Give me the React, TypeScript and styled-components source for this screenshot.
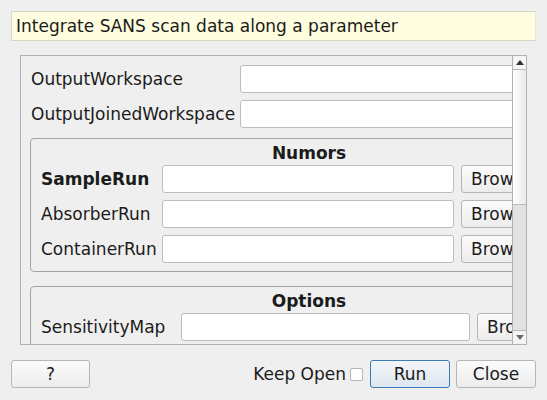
import React from "react";
import styled, { createGlobalStyle } from "styled-components";

const Global = createGlobalStyle`
  html, body { margin: 0; padding: 0; background: #efefef; }
  body { font-family: "DejaVu Sans", "Liberation Sans", sans-serif; font-size: 17px; color: #1b1b1b; }
  * { box-sizing: border-box; }
`;

const Page = styled.div`
  width: 547px;
  height: 400px;
  padding: 11px 11px 0 11px;
  display: flex;
  flex-direction: column;
`;

const Description = styled.div`
  width: 525px;
  height: 30px;
  background: #fefddf;
  border: 1px solid #d6d6c4;
  border-right-color: #e6e6d8;
  padding-left: 4px;
  display: flex;
  align-items: center;
  line-height: 1;
`;

const ScrollArea = styled.div`
  margin: 14px 0 0 9px;
  width: 507px;
  height: 290px;
  border: 1px solid #b2b2b2;
  display: flex;
  background: #efefef;
`;

const Viewport = styled.div`
  flex: 1;
  overflow: hidden;
  position: relative;
`;

const Content = styled.div`
  width: 590px;
  padding: 9px 0 0 9px;
  display: flex;
  flex-direction: column;
`;

const TopGrid = styled.div`
  display: grid;
  grid-template-columns: 203px 340px;
  column-gap: 7px;
  row-gap: 7px;
  align-items: center;
`;

const Label = styled.div<{ $bold?: boolean }>`
  font-weight: ${(p) => (p.$bold ? "bold" : "normal")};
  white-space: nowrap;
  padding-left: 1px;
`;

const Input = styled.div`
  height: 28px;
  background: #ffffff;
  border: 1px solid #bdbdbd;
  border-radius: 3px;
`;

const Group = styled.div<{ $mt: number }>`
  margin-top: ${(p) => p.$mt}px;
  width: 549px;
  border: 1px solid #a3a3a3;
  border-radius: 4px;
  padding: 0 0 8px 9px;
  display: flex;
  flex-direction: column;
`;

const GroupTitle = styled.div`
  font-weight: bold;
  text-align: center;
  height: 26px;
  line-height: 26px;
  padding-top: 1px;
`;

const GroupGrid = styled.div<{ $label: number; $input: number }>`
  display: grid;
  grid-template-columns: ${(p) => p.$label}px ${(p) => p.$input}px 80px;
  column-gap: 7px;
  row-gap: 7px;
  align-items: center;
`;

const Button = styled.div<{ $primary?: boolean; $w?: number; $ml?: number }>`
  height: 28px;
  width: ${(p) => (p.$w ? `${p.$w}px` : "auto")};
  margin-left: ${(p) => p.$ml ?? 0}px;
  border: 1px solid ${(p) => (p.$primary ? "#3d7ab8" : "#b6b6b6")};
  border-radius: 3px;
  background: ${(p) =>
    p.$primary
      ? "linear-gradient(#f2f6fa, #dde6ef)"
      : "linear-gradient(#fbfbfb, #ececec)"};
  display: flex;
  align-items: center;
  justify-content: center;
  white-space: nowrap;
  overflow: hidden;
`;

const BrowseButton = styled(Button)`
  justify-content: flex-start;
  padding-left: 9px;
`;

const ScrollBar = styled.div`
  width: 14px;
  border-left: 1px solid #b2b2b2;
  display: flex;
  flex-direction: column;
`;

const ArrowBox = styled.div<{ $down?: boolean }>`
  height: 14px;
  display: flex;
  align-items: center;
  justify-content: center;
  background: #f4f4f4;
  border-bottom: ${(p) => (p.$down ? "none" : "1px solid #b8b8b8")};
  border-top: ${(p) => (p.$down ? "1px solid #b8b8b8" : "none")};
`;

const Trough = styled.div<{ $h: number }>`
  height: ${(p) => p.$h}px;
  background: linear-gradient(to right, #ffffff, #e9e9e9);
`;

const Handle = styled.div`
  flex: 1;
  background: #e2e2e2;
  border-top: 1px solid #bcbcbc;
`;

const Footer = styled.div`
  margin-top: 15px;
  width: 525px;
  display: flex;
  align-items: center;
`;

const Spacer = styled.div`
  flex: 1;
`;

const KeepOpen = styled.div`
  display: flex;
  align-items: center;
  gap: 4px;
  margin-right: 7px;
`;

const CheckBox = styled.div`
  width: 13px;
  height: 13px;
  background: #ffffff;
  border: 1px solid #b4b4b4;
  border-radius: 2px;
`;

const Arrow = ({ down }: { down?: boolean }) => (
  <svg width="8" height="5" viewBox="0 0 8 5">
    <polygon points={down ? "0,0 8,0 4,5" : "0,5 8,5 4,0"} fill={down ? "#6a6a6a" : "#303030"} />
  </svg>
);

export default function App() {
  return (
    <>
      <Global />
      <Page>
        <Description>Integrate SANS scan data along a parameter</Description>
        <ScrollArea>
          <Viewport>
            <Content>
              <TopGrid>
                <Label>OutputWorkspace</Label>
                <Input />
                <Label>OutputJoinedWorkspace</Label>
                <Input />
              </TopGrid>
              <Group $mt={10}>
                <GroupTitle>Numors</GroupTitle>
                <GroupGrid $label={115} $input={292}>
                  <Label $bold>SampleRun</Label>
                  <Input />
                  <BrowseButton>Browse</BrowseButton>
                  <Label>AbsorberRun</Label>
                  <Input />
                  <BrowseButton>Browse</BrowseButton>
                  <Label>ContainerRun</Label>
                  <Input />
                  <BrowseButton>Browse</BrowseButton>
                </GroupGrid>
              </Group>
              <Group $mt={14}>
                <GroupTitle>Options</GroupTitle>
                <GroupGrid $label={134} $input={289}>
                  <Label>SensitivityMap</Label>
                  <Input />
                  <BrowseButton>Browse</BrowseButton>
                </GroupGrid>
              </Group>
            </Content>
          </Viewport>
          <ScrollBar>
            <ArrowBox>
              <Arrow />
            </ArrowBox>
            <Trough $h={134} />
            <Handle />
            <ArrowBox $down>
              <Arrow down />
            </ArrowBox>
          </ScrollBar>
        </ScrollArea>
        <Footer>
          <Button $w={79}>?</Button>
          <Spacer />
          <KeepOpen>
            <span>Keep Open</span>
            <CheckBox />
          </KeepOpen>
          <Button $primary $w={80}>Run</Button>
          <Button $w={80} $ml={6}>Close</Button>
        </Footer>
      </Page>
    </>
  );
}
